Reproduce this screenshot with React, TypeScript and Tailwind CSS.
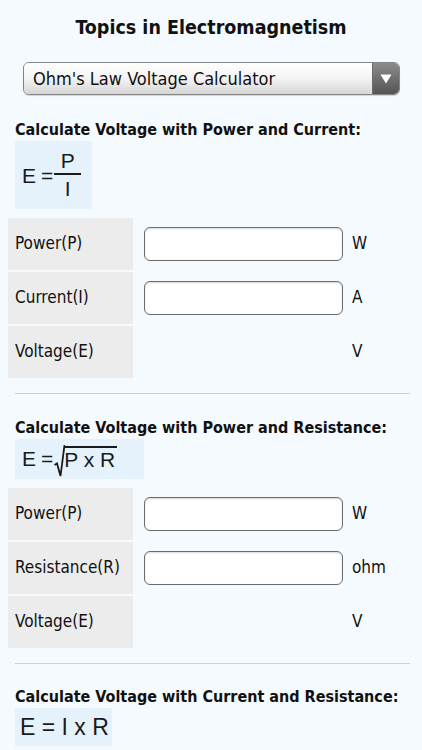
import React from 'react';

type Row = { label: string; unit: string; input: boolean };

const ui = "font-['DejaVu_Sans_Condensed','DejaVu_Sans',sans-serif]";
const math = "font-['Liberation_Sans',Arial,sans-serif]";

function Heading({ children }: { children: React.ReactNode }) {
    return (
        <h2 className={`${ui} px-[15px] h-[20px] leading-[20px] text-[16px] font-bold text-[#111] whitespace-nowrap`}>{children}</h2>
    );
}

function CalcTable({ rows }: { rows: Row[] }) {
    return (
        <div className="mt-[9px] ml-[8px] flex flex-col gap-[2px]">
            {rows.map((r) => (
                <div key={r.label} className="flex items-center h-[52px]">
                    <div className={`${ui} w-[125px] h-full bg-[#ececec] flex items-center pl-[7px] text-[17px] text-[#111]`}>
                        {r.label}
                    </div>
                    <div className="ml-[11px] w-[199px] h-[34px]">
                        {r.input && (
                            <input
                                type="text"
                                className="w-full h-full bg-white border-[1.5px] border-[#6b6b6b] rounded-[6px] shadow-[inset_0_1px_2px_rgba(0,0,0,0.15)] outline-none px-2"
                            />
                        )}
                    </div>
                    <div className={`${ui} ml-[9px] text-[17px] text-[#111]`}>{r.unit}</div>
                </div>
            ))}
        </div>
    );
}

function Divider() {
    return <div className="mt-[15px] ml-[15px] mr-[12px] h-px bg-[#cfcfcf]" />;
}

export default function App() {
    return (
        <div className="min-h-screen bg-[#f4fafd] pb-6">
            <h1 className={`${ui} h-14 flex items-center justify-center text-[19.5px] font-bold text-[#111]`}>
                Topics in Electromagnetism
            </h1>

            <div className="mt-[6px] ml-[23px] mr-[22px] h-[33px] flex rounded-[6px] border border-[#858585] overflow-hidden shadow-[0_1px_1px_rgba(0,0,0,0.15)]">
                <div className={`${ui} flex-1 flex items-center pl-[9px] text-[18px] text-[#111] bg-gradient-to-b from-white via-[#f3f3f3] to-[#d6d6d6]`}>
                    Ohm's Law Voltage Calculator
                </div>
                <div className="w-[27px] flex items-center justify-center bg-gradient-to-b from-[#8c8c8c] to-[#555] border-l border-[#6a6a6a]">
                    <svg width="12" height="10" viewBox="0 0 12 10">
                        <path d="M0.5 0.5 H11.5 L6 9.5 Z" fill="#fff" />
                    </svg>
                </div>
            </div>

            {/* Power and Current */}
            <div className="mt-[25px]">
                <Heading>Calculate Voltage with Power and Current:</Heading>
                <div className={`${math} ml-[15px] mt-[1px] w-[77px] h-[68px] bg-[#e6f2fb] flex items-center pl-[7px] text-[21px] text-[#1a1a1a]`}>
                    <span className="mt-[2px]">E</span>
                    <span className="ml-[5px] mt-[2px]">=</span>
                    <span className="flex flex-col items-center ml-[1px] leading-none">
                        <span className="leading-[25px]">P</span>
                        <span className="w-[27px] h-[2px] bg-[#1a1a1a]" />
                        <span className="leading-[27px]">I</span>
                    </span>
                </div>
                <CalcTable
                    rows={[
                        { label: 'Power(P)', unit: 'W', input: true },
                        { label: 'Current(I)', unit: 'A', input: true },
                        { label: 'Voltage(E)', unit: 'V', input: false },
                    ]}
                />
                <Divider />
            </div>

            {/* Power and Resistance */}
            <div className="mt-[24px]">
                <Heading>Calculate Voltage with Power and Resistance:</Heading>
                <div className={`${math} ml-[15px] mt-[1px] w-[129px] h-[40px] bg-[#e6f2fb] flex items-center pl-[7px] text-[21px] text-[#1a1a1a]`}>
                    <span>E</span>
                    <span className="ml-[5px]">=</span>
                    <svg width="11" height="36" viewBox="0 0 11 36" className="ml-[1px] mt-[4px]">
                        <path d="M0.5 22 L3 20.5 L6.5 33 L10.5 2" fill="none" stroke="#1a1a1a" strokeWidth="1.8" />
                    </svg>
                    <span className="border-t-2 border-[#1a1a1a] leading-[24px] pr-[2px] -ml-[1px] mb-[1px]">P x R</span>
                </div>
                <CalcTable
                    rows={[
                        { label: 'Power(P)', unit: 'W', input: true },
                        { label: 'Resistance(R)', unit: 'ohm', input: true },
                        { label: 'Voltage(E)', unit: 'V', input: false },
                    ]}
                />
                <Divider />
            </div>

            {/* Current and Resistance */}
            <div className="mt-[23px]">
                <Heading>Calculate Voltage with Current and Resistance:</Heading>
                <div className={`${math} ml-[15px] mt-[1px] w-[97px] h-[38px] bg-[#e6f2fb] flex items-center pl-[5px] text-[23px] text-[#1a1a1a]`}>
                    E = I x R
                </div>
            </div>
        </div>
    );
}
